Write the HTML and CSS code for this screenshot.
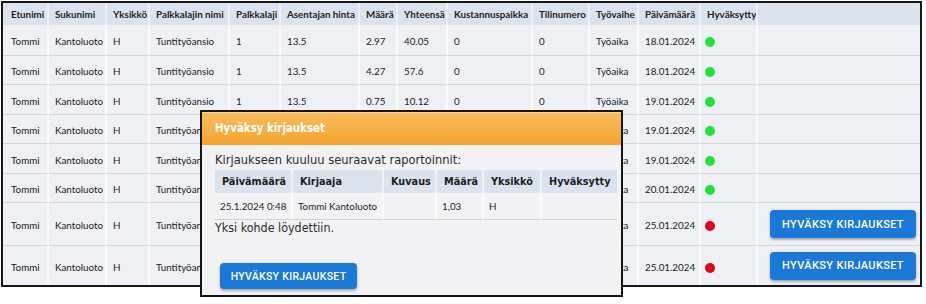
FILE: index.html
```html
<!DOCTYPE html>
<html lang="fi">
<head>
<meta charset="utf-8">
<title>Kirjaukset</title>
<link rel="stylesheet" href="styles.css">
</head>
<body>
<div class="page">
  <table class="grid">
    <colgroup>
      <col class="c46"><col class="c58"><col class="c43"><col class="c80"><col class="c51"><col class="c79"><col class="c38"><col class="c50"><col class="c85"><col class="c57"><col class="c49"><col class="c62"><col class="c57"><col class="c162">
    </colgroup>
    <thead>
      <tr>
        <th>Etunimi</th><th>Sukunimi</th><th>Yksikkö</th><th>Palkkalajin nimi</th><th>Palkkalaji</th><th>Asentajan hinta</th><th>Määrä</th><th>Yhteensä</th><th>Kustannuspaikka</th><th>Tilinumero</th><th>Työvaihe</th><th>Päivämäärä</th><th>Hyväksytty</th><th class="last"></th>
      </tr>
    </thead>
    <tbody>
      <tr class="r31"><td>Tommi</td><td>Kantoluoto</td><td>H</td><td>Tuntityöansio</td><td>1</td><td>13.5</td><td>2.97</td><td>40.05</td><td>0</td><td>0</td><td>Työaika</td><td>18.01.2024</td><td class="st"><span class="dot ok"></span></td><td class="last"></td></tr>
      <tr class="r29"><td>Tommi</td><td>Kantoluoto</td><td>H</td><td>Tuntityöansio</td><td>1</td><td>13.5</td><td>4.27</td><td>57.6</td><td>0</td><td>0</td><td>Työaika</td><td>18.01.2024</td><td class="st"><span class="dot ok"></span></td><td class="last"></td></tr>
      <tr class="r30"><td>Tommi</td><td>Kantoluoto</td><td>H</td><td>Tuntityöansio</td><td>1</td><td>13.5</td><td>0.75</td><td>10.12</td><td>0</td><td>0</td><td>Työaika</td><td>19.01.2024</td><td class="st"><span class="dot ok"></span></td><td class="last"></td></tr>
      <tr class="r29"><td>Tommi</td><td>Kantoluoto</td><td>H</td><td>Tuntityöansio</td><td>1</td><td>13.5</td><td>3.5</td><td>47.25</td><td>0</td><td>0</td><td>Työaika</td><td>19.01.2024</td><td class="st"><span class="dot ok"></span></td><td class="last"></td></tr>
      <tr class="r30"><td>Tommi</td><td>Kantoluoto</td><td>H</td><td>Tuntityöansio</td><td>1</td><td>13.5</td><td>2.25</td><td>30.37</td><td>0</td><td>0</td><td>Työaika</td><td>19.01.2024</td><td class="st"><span class="dot ok"></span></td><td class="last"></td></tr>
      <tr class="r29"><td>Tommi</td><td>Kantoluoto</td><td>H</td><td>Tuntityöansio</td><td>1</td><td>13.5</td><td>4</td><td>54</td><td>0</td><td>0</td><td>Työaika</td><td>20.01.2024</td><td class="st"><span class="dot ok"></span></td><td class="last"></td></tr>
      <tr class="r43"><td>Tommi</td><td>Kantoluoto</td><td>H</td><td>Tuntityöansio</td><td>1</td><td>13.5</td><td>1.03</td><td>13.9</td><td>0</td><td>0</td><td>Työaika</td><td>25.01.2024</td><td class="st"><span class="dot bad"></span></td><td class="last act"><button class="btn">HYVÄKSY KIRJAUKSET</button></td></tr>
      <tr class="r39"><td>Tommi</td><td>Kantoluoto</td><td>H</td><td>Tuntityöansio</td><td>1</td><td>13.5</td><td>1.03</td><td>13.9</td><td>0</td><td>0</td><td>Työaika</td><td>25.01.2024</td><td class="st"><span class="dot bad"></span></td><td class="last act"><button class="btn">HYVÄKSY KIRJAUKSET</button></td></tr>
    </tbody>
  </table>

  <div class="modal">
    <div class="modal-head">Hyväksy kirjaukset</div>
    <div class="modal-body">
      <p class="lead">Kirjaukseen kuuluu seuraavat raportoinnit:</p>
      <table class="sub">
        <colgroup>
          <col class="s78"><col class="s91"><col class="s53"><col class="s47"><col class="s58"><col class="s75">
        </colgroup>
        <thead>
          <tr><th>Päivämäärä</th><th>Kirjaaja</th><th>Kuvaus</th><th>Määrä</th><th>Yksikkö</th><th class="last">Hyväksytty</th></tr>
        </thead>
        <tbody>
          <tr><td>25.1.2024 0:48</td><td>Tommi Kantoluoto</td><td></td><td>1,03</td><td>H</td><td class="last"></td></tr>
        </tbody>
      </table>
      <p class="found">Yksi kohde löydettiin.</p>
      <button class="btn btn-sm">HYVÄKSY KIRJAUKSET</button>
    </div>
  </div>
</div>
</body>
</html>
```
FILE: styles.css
```css
* { box-sizing: border-box; }
body { margin: 0; background: #fff; }
.page { position: relative; padding: 1px 0 0 1px; min-height: 300px; }

/* main grid */
.grid {
  width: 921px;
  table-layout: fixed;
  border-collapse: separate;
  border-spacing: 0;
  border: 2px solid #161616;
  background: #eef0f4;
  font-family: Lato, "Liberation Sans", sans-serif;
  font-size: 9.8px;
  color: #222;
}
.c46 { width: 46px; } .c58 { width: 58px; } .c43 { width: 43px; } .c80 { width: 80px; }
.c51 { width: 51px; } .c79 { width: 79px; } .c38 { width: 38px; } .c50 { width: 50px; }
.c85 { width: 85px; } .c57 { width: 57px; } .c49 { width: 49px; } .c62 { width: 62px; }
.c162 { width: 162px; }
.grid th, .grid td {
  padding: 0 0 0 6px;
  text-align: left;
  white-space: nowrap;
  overflow: hidden;
  border-right: 2px solid #f9fafc;
}
.grid th {
  height: 22px;
  background: #d9e2ed;
  font-weight: 700;
  color: #1e1e1e;
  border-right-color: #eef2f7;
}
.grid th:first-child, .grid td:first-child { padding-left: 8px; }
.grid td { border-bottom: 1px solid #d3d5d9; padding-top: 2px; }
.grid .last { border-right: 0; }
.grid tbody tr:last-child td { border-bottom: 0; }
.r29 { height: 29px; } .r30 { height: 30px; } .r31 { height: 31px; }
.r43 { height: 43px; } .r39 { height: 39px; }
.grid td.act { padding: 0 0 0 12px; }
.grid td.st { padding-left: 4px; }

.dot { display: inline-block; width: 10px; height: 10px; border-radius: 50%; vertical-align: middle; }
.dot.ok { background: #1fe33a; }
.dot.bad { background: #e8001b; }

.btn {
  display: block;
  width: 146px;
  height: 28px;
  padding: 0;
  border: 0;
  border-radius: 4px;
  background: #1a78d6;
  color: #fff;
  font-family: Roboto, "Liberation Sans", sans-serif;
  font-weight: 500;
  font-size: 11px;
  letter-spacing: 0.35px;
  box-shadow: 0 2px 2px rgba(0,0,0,0.22), 0 1px 4px rgba(0,0,0,0.12);
}
.btn-sm { width: 137px; height: 26px; font-size: 10.5px; letter-spacing: 0.3px; margin: 27px 0 0 5px; }

/* modal */
.modal {
  position: absolute;
  left: 200px;
  top: 110px;
  width: 423px;
  height: 187px;
  border: 2px solid #151515;
  background: #f2f2f4;
  font-family: "DejaVu Sans Condensed", "DejaVu Sans", sans-serif;
}
.modal-head {
  height: 33px;
  padding: 8px 0 0 13px;
  background: linear-gradient(#f8bc5c, #f3a42d);
  color: #fff;
  font-weight: 700;
  font-size: 11.4px;
  border-top: 1px solid #fbd79a;
}
.modal-body { padding: 7px 4px 0 13px; }
.lead, .found { margin: 0; line-height: 16px; color: #2c2c2c; }
.lead { margin-bottom: 2px; font-size: 12.8px; }
.found { font-size: 12.4px; }
.sub {
  width: 402px;
  table-layout: fixed;
  border-collapse: separate;
  border-spacing: 0;
  color: #1e1e1e;
}
.s78 { width: 78px; } .s91 { width: 91px; } .s53 { width: 53px; } .s47 { width: 47px; } .s58 { width: 58px; } .s75 { width: 75px; }
.sub th, .sub td { padding: 0 0 0 7px; text-align: left; white-space: nowrap; border-right: 2px solid #f7f8fa; }
.sub th { height: 23px; background: #d9e2ed; font-weight: 700; font-size: 10.8px; border-right-color: #eef2f7; }
.sub td { height: 27px; font-family: Lato, "Liberation Sans", sans-serif; font-size: 9.8px; padding-left: 5px; border-bottom: 1px solid #cfd1d5; }
.sub .last { border-right: 0; }
```
